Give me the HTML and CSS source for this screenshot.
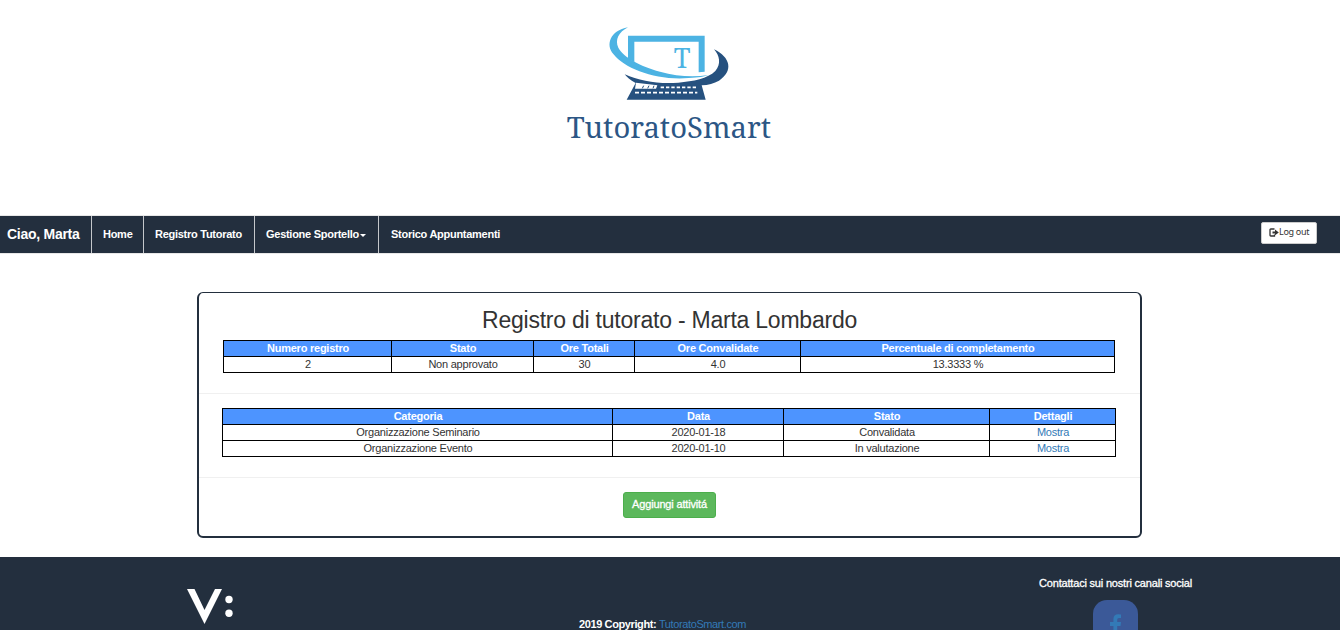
FILE: index.html
```html
<!DOCTYPE html>
<html lang="it">
<head>
<meta charset="utf-8">
<title>TutoratoSmart</title>
<link rel="stylesheet" href="styles.css">
</head>
<body>
<header class="banner">
  <svg class="logo" viewBox="0 0 720 420" width="240" height="140" role="img" aria-label="TutoratoSmart">
    <path fill="#4cb3e3" d="M234 62H464V170L446 172V80H253V142L234 132Z"/>
    <path fill="#4cb3e3" d="M234 37C180 47 166 90 190 117C225 162 320 197 416 189C446 188 464 185 475 180C430 187 380 184 330 170C270 154 220 126 205 98C194 75 206 51 234 37Z"/>
    <path fill="#26517f" d="M492 103C542 127 551 168 507 197C492 205 475 210 455 211L467 254H230L257 204C240 196 230 186 224 178C270 199 330 208 385 203C430 199 473 191 496 168C514 148 509 121 492 103Z"/>
    <path fill="#fff" d="M258 203L322 211L318 221H255Z"/>
    <path stroke="#26517f" stroke-width="3" d="M277 220L281 212M293 220L297 212M309 220L312 212"/>
    <path stroke="#fff" stroke-width="5" stroke-dasharray="10 6" d="M332 217H440"/>
    <path stroke="#fff" stroke-width="5" stroke-dasharray="12 6" d="M255 233H442"/>
    <text class="logo-letter" x="371" y="158" textLength="50" lengthAdjust="spacingAndGlyphs">T</text>
    <text class="logo-name" x="50" y="368" textLength="613" lengthAdjust="spacingAndGlyphs">TutoratoSmart</text>
  </svg>
</header>
<nav class="nav">
  <a class="nav-item nav-brand">Ciao, Marta</a>
  <a class="nav-item nav-home">Home</a>
  <a class="nav-item nav-register">Registro Tutorato</a>
  <a class="nav-item nav-desk">Gestione Sportello<span class="caret"></span></a>
  <a class="nav-item nav-history">Storico Appuntamenti</a>
  <button class="logout"><svg width="10" height="9" viewBox="0 0 10 9"><path d="M5.5 1H1.8Q1 1 1 1.8V7.2Q1 8 1.8 8H5.5V6.5" fill="none" stroke="#333" stroke-width="1.3"/><path d="M3.5 3.5H6V1.5L9.8 4.5L6 7.3V5.5H3.5Z" fill="#333"/></svg><span>Log out</span></button>
</nav>
<main class="card">
  <h1 class="title">Registro di tutorato - Marta Lombardo</h1>
  <table class="grid summary">
    <colgroup><col class="s1"><col class="s2"><col class="s3"><col class="s4"><col class="s5"></colgroup>
    <tr><th>Numero registro</th><th>Stato</th><th>Ore Totali</th><th>Ore Convalidate</th><th>Percentuale di completamento</th></tr>
    <tr><td>2</td><td>Non approvato</td><td>30</td><td>4.0</td><td>13.3333 %</td></tr>
  </table>
  <hr class="rule">
  <table class="grid activities">
    <colgroup><col class="a1"><col class="a2"><col class="a3"><col class="a4"></colgroup>
    <tr><th>Categoria</th><th>Data</th><th>Stato</th><th>Dettagli</th></tr>
    <tr><td>Organizzazione Seminario</td><td>2020-01-18</td><td>Convalidata</td><td><a class="link">Mostra</a></td></tr>
    <tr><td>Organizzazione Evento</td><td>2020-01-10</td><td>In valutazione</td><td><a class="link">Mostra</a></td></tr>
  </table>
  <hr class="rule">
  <button class="add">Aggiungi attivitá</button>
</main>
<footer class="footer">
  <svg class="mark" width="50" height="40" viewBox="0 0 50 40"><path fill="#fff" d="M0 2H7.5L17.5 23L28 2H35L17.5 37Z"/><circle fill="#fff" cx="42" cy="12.5" r="3.7"/><circle fill="#fff" cx="42" cy="26.3" r="3.7"/></svg>
  <p class="copyright">2019 Copyright: <a class="link">TutoratoSmart.com</a></p>
  <div class="social">
    <p class="contact">Contattaci sui nostri canali social</p>
    <a class="facebook"><svg width="12" height="22" viewBox="0 0 12 22"><path fill="#337ab7" d="M11 .5V4H9Q7.2 4 7.2 5.8V8H11L10.5 12H7.2V22H3.4V12H0V8H3.4V5.2Q3.4 .3 8.3 .3Z"/></svg></a>
  </div>
</footer>
</body>
</html>
```
FILE: styles.css
```css
* { box-sizing: border-box; }
body {
  margin: 0;
  height: 630px;
  overflow: hidden;
  background: #fff;
  color: #333;
  font: 11px/16px "Liberation Sans", Arial, sans-serif;
}
.banner { height: 215px; padding-top: 15px; display: flex; justify-content: center; align-items: flex-start; }
.logo { display: block; }
.logo-letter { font: 80px "Noto Serif", "DejaVu Serif", serif; fill: #4cb3e3; }
.logo-name { font: 87px "Noto Serif", "DejaVu Serif", serif; fill: #2c5685; }

.nav {
  height: 39px;
  display: flex;
  background: #232f3e;
  border-top: 1px solid #e7e7e7;
  border-bottom: 1px solid #e7e7e7;
  color: #fff;
  font-weight: bold;
  line-height: 36px;
  letter-spacing: -0.27px;
}
.nav-item { border-right: 1px solid #c4c7cb; white-space: nowrap; padding-left: 11px; }
.nav-brand { width: 92px; padding-left: 7px; font-size: 14px; }
.nav-home { width: 52px; }
.nav-register { width: 111px; }
.nav-desk { width: 124px; }
.nav-history { padding-left: 12px; border-right: 0; }
.caret {
  display: inline-block;
  vertical-align: middle;
  margin-left: 1px;
  border: 3px solid transparent;
  border-top-color: #fff;
  border-bottom: 0;
}
.logout {
  display: flex;
  align-items: center;
  margin: 6px 23px 0 auto;
  width: 56px;
  height: 22px;
  padding: 0 0 2px 7px;
  background: #fff;
  border: 1px solid #ccc;
  border-radius: 2px;
  color: #333;
  font: 9px/14px "Noto Sans", sans-serif;
  letter-spacing: -0.3px;
  white-space: nowrap;
}

.card {
  width: 945px;
  height: 246px;
  margin: 38px 0 0 197px;
  border: 2px solid #232f3e;
  border-top-width: 1px;
  border-radius: 6px;
  display: flex;
  flex-direction: column;
}
.title { margin: 14px 0 7px; font-size: 23px; line-height: 26px; font-weight: normal; text-align: center; letter-spacing: -0.23px; }
.grid {
  table-layout: fixed;
  border-collapse: separate;
  border-spacing: 0;
  border: solid #000;
  border-width: 1px 0 0 1px;
  text-align: center;
  letter-spacing: -0.23px;
}
.grid th, .grid td { height: 16px; padding: 0 0 0 1px; border: solid #000; border-width: 0 1px 1px 0; line-height: 15px; }
.grid th { background: #4d94ff; color: #fff; }
.summary { width: 892px; margin-left: 24px; }
.s1 { width: 168px; }
.s2 { width: 142px; }
.s3 { width: 101px; }
.s4 { width: 166px; }
.s5 { width: 314px; }
.activities { width: 894px; margin-left: 23px; }
.a1 { width: 390px; }
.a2 { width: 171px; }
.a3 { width: 206px; }
.a4 { width: 126px; }
.link { color: #337ab7; }
.rule { width: 100%; margin: 20px 0 14px; border: 0; border-top: 1px solid #f0f0f0; }
.add {
  align-self: center;
  width: 93px;
  height: 26px;
  padding: 0 0 2px;
  background: #5cb85c;
  border: 1px solid #4cae4c;
  border-radius: 3px;
  color: #fff;
  font: 11px/16px "Liberation Sans", Arial, sans-serif;
  letter-spacing: -0.17px;
  -webkit-text-stroke: 0.3px #fff;
}

.footer {
  height: 73px;
  margin-top: 19px;
  display: flex;
  justify-content: space-between;
  overflow: hidden;
  background: #232f3e;
  color: #fff;
  padding: 0 148px 0 187px;
}
.mark { margin-top: 30px; }
.copyright { margin: 59px 0 0 49px; font-weight: bold; letter-spacing: -0.39px; }
.copyright .link { font-weight: normal; }
.contact { margin: 18px 0 9px; letter-spacing: -0.19px; -webkit-text-stroke: 0.3px #fff; }
.social { display: flex; flex-direction: column; align-items: center; }
.facebook {
  width: 45px;
  height: 45px;
  flex: none;
  border-radius: 14px;
  background: #3b5998;
  display: flex;
  justify-content: center;
  padding-top: 14px;
}
```
